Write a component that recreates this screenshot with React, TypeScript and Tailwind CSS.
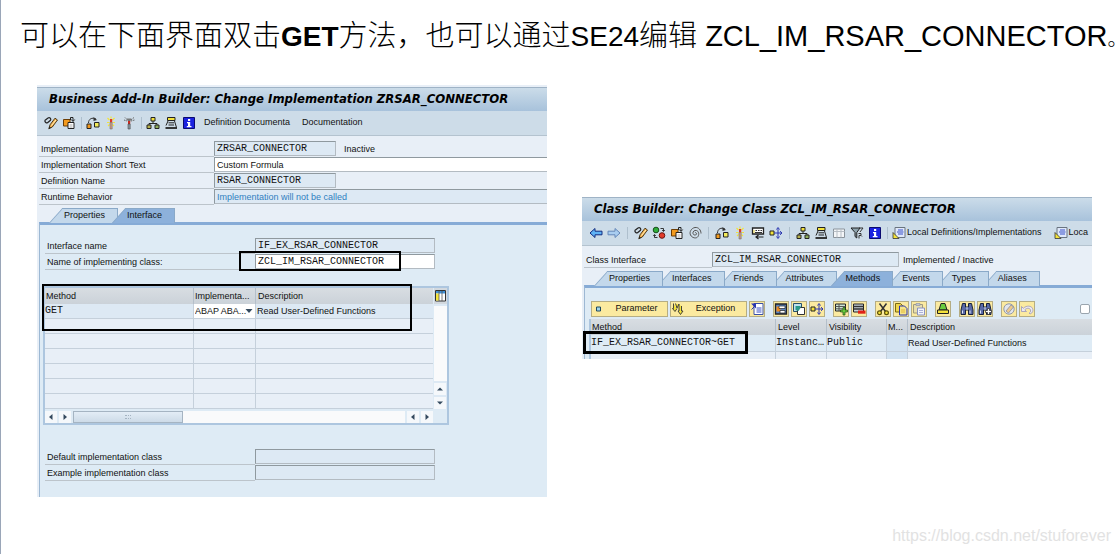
import { FC, ReactNode } from "react";
import clsx from "clsx";

type IconProps = { children: ReactNode };

const Icon: FC<IconProps> = ({ children }) => (
  <svg viewBox="0 0 14 14" className="size-3.5 shrink-0" fill="none" aria-hidden="true">
    {children}
  </svg>
);

const icons = {
  edit: (
    <Icon>
      <path d="M.8 4.500L4 2M3.500 6.800L6.800 4M.8 4.500c0 1.800 1.700 2.800 2.700 2.300M4 2c1.800-.8 2.800.3 2.800 2" stroke="#222" strokeWidth="1.200" />
      <path d="M4.800 12.800L6 8.800 11 2.200 13.500 4 8.300 11z" fill="#f6b04a" stroke="#3a2a10" strokeWidth=".9" />
      <path d="M4.800 12.800l.6-2.300 1.700 1.300z" fill="#222" />
      <path d="M7.500 9.500L12 4" stroke="#fff2c0" />
    </Icon>
  ),
  other: (
    <Icon>
      <path d="M1.500 3.500h6.500v6.500H1.500z" fill="#f39a1e" stroke="#6b3d05" />
      <path d="M6 6.500h6v6H6z" fill="#fff" stroke="#222" />
      <path d="M8.500 4V1.500h2.500V5M9.300 3.500L11 5.500 12.700 3.500" stroke="#222" />
      <path d="M7.500 9h3M7.500 11h3" stroke="#888" strokeWidth=".7" />
    </Icon>
  ),
  test: (
    <Icon>
      <path d="M2.500 7C2.500 3 6 1 10 3" stroke="#333" />
      <path d="M7.500 1L11 4 7.500 5z" fill="#333" />
      <path d="M1 8h4v4.500H1z" fill="#f39a1e" stroke="#222" />
      <path d="M8.500 6.500H13V11H8.500z" fill="#f3ec5a" stroke="#222" />
    </Icon>
  ),
  activate: (
    <Icon>
      <path d="M3.500 2l2 2M10.500 2l-2 2M3 6.500h2.500M11 6.500H8.500M7 .5v2M4 10l1.500-1.500M10 10L8.500 8.500" stroke="#f4e43a" strokeWidth="1.200" />
      <path d="M6 3h2.200v3.500H6z" fill="#e03426" />
      <path d="M6 6.500h2.200V13H6z" fill="#c99a86" stroke="#666" strokeWidth=".5" />
    </Icon>
  ),
  wand: (
    <Icon>
      <path d="M3 1.500l2.500 2.500M12 1.500L9 4M2 4l3 1M12.500 4L9 5" stroke="#666" strokeDasharray="1.500 .8" />
      <path d="M4.500 2.500h5l-1.300 3H6z" fill="#777" />
      <path d="M6 5h2.200v3H6z" fill="#c92a20" />
      <path d="M6 8h2.200v5H6z" fill="#8e9aa2" stroke="#333" strokeWidth=".5" />
    </Icon>
  ),
  tree: (
    <Icon>
      <path d="M7 5v2.500M3 9V7.500h8V9" stroke="#222" />
      <path d="M5 1.500h4V5H5z" fill="#f4e33a" stroke="#222" />
      <path d="M1 9h4v3.500H1z" fill="#b7b24c" stroke="#222" />
      <path d="M9 9h4v3.500H9z" fill="#8fae5a" stroke="#222" />
    </Icon>
  ),
  stack: (
    <Icon>
      <path d="M3.500 1.500h7.500V4.500H3.500z" fill="#f4e33a" stroke="#222" />
      <path d="M4.500 6.800h5.500M4.500 9h5.500M10.500 5L12.500 11.500M4 5L2 9.500" stroke="#222" />
      <path d="M1.500 12h11.500" stroke="#222" strokeWidth="1.800" />
    </Icon>
  ),
  info: (
    <Icon>
      <path d="M1.500 1.500h11v11h-11z" fill="#1b22e0" stroke="#0a0a70" />
      <path d="M6 3h2.200v2H6zM5 6h3.200v4H9.500v1.200H4.800V10H6V7.200H5z" fill="#fff" />
    </Icon>
  ),
  back: (
    <Icon>
      <path d="M1 7l5-4.500v2.700h7v3.600H6v2.700z" fill="#5fb2f4" stroke="#102a80" />
    </Icon>
  ),
  forward: (
    <Icon>
      <path d="M13 7L8 2.500v2.700H1v3.600h7v2.700z" fill="#a9cdf0" stroke="#6487b8" />
    </Icon>
  ),
  swap: (
    <Icon>
      <circle cx="4" cy="4" r="2.800" fill="#2fae3c" stroke="#184f1c" />
      <circle cx="10" cy="9.500" r="2.800" fill="#e23a2a" stroke="#6b130d" />
      <path d="M8.500 2.500h3v2.500M10.200 4l1.300 1.500L12.800 4M5.500 11.500h-3V9M1.300 10l1.200-1.500L3.800 10" stroke="#222" strokeWidth=".9" />
    </Icon>
  ),
  spiral: (
    <Icon>
      <path d="M7 7c.5-1 2 0 1.500 1.200S5.500 9.500 5 7.500 6.500 4 8.500 4.500 11.500 8 10 10.500 4 12 2.500 9 3.500 2 7 1.500 13 4 13 7.500" stroke="#555" />
    </Icon>
  ),
  train: (
    <Icon>
      <path d="M1.500 2h11v6h-11z" fill="#fff" stroke="#222" strokeWidth="1.300" />
      <path d="M4.500 4.500h1.500M7 4.500h1.500M9.500 4.500H11M4 6.500h7" stroke="#333" strokeWidth="1.200" />
      <path d="M5 11h7.500M7.500 9L5 11l2.500 2" stroke="#222" strokeWidth="1.200" />
      <path d="M2.500 4h1v3h-1z" fill="#e8d338" />
    </Icon>
  ),
  expand: (
    <Icon>
      <path d="M1 5h4v4H1z" fill="#f4e33a" stroke="#222" />
      <path d="M5 7h7.500M9 2.500v9M11 5.200L13 7l-2 1.800M7.500 3.500L9 1.500l1.500 2M7.500 10.500L9 12.500l1.500-2" stroke="#2a35b0" />
    </Icon>
  ),
  grid: (
    <Icon>
      <path d="M1.500 3h11v8.500h-11z" fill="#f4f6f8" stroke="#8a939b" />
      <path d="M1.500 5.500h11M5 3v8.500M9 3v8.500" stroke="#b7bec5" />
    </Icon>
  ),
  filter: (
    <Icon>
      <path d="M1 2h9L6.800 6.500V12L5 10.500v-4z" fill="#8fa3ad" stroke="#222" />
      <path d="M9 2h4l-3 4M8.500 7.500h2.500v2H9v3M11 9.500l1 1" stroke="#333" />
    </Icon>
  ),
  local: (
    <Icon>
      <path d="M3 1.500h10v10H3z" fill="#dfe8fa" stroke="#6a7480" />
      <path d="M6 4h5M5 6h6.500M6 8h5" stroke="#3a50c8" strokeWidth="1.200" />
      <path d="M1 6.500l6 6H1z" fill="#f4e33a" stroke="#333" strokeWidth=".8" />
    </Icon>
  ),
  field: (
    <Icon>
      <path d="M4.500 5h4v4h-4z" fill="#9fd4ea" stroke="#1f4a60" />
    </Icon>
  ),
  exception: (
    <Icon>
      <path d="M2.500 1.500v5h-1L4 9.500l2-3M4.500 1.500L6 6l2-4v7H7l2.500 3.500L12 9h-1.500V4" fill="#f4e33a" stroke="#333" strokeWidth=".9" />
    </Icon>
  ),
  doc: (
    <Icon>
      <path d="M4 1.500h9v11H4z" fill="#fff" stroke="#3a50a8" />
      <path d="M6.500 6h5M6.500 8h5M6.500 10h5" stroke="#3a50c8" />
      <path d="M1 1.500h5v5z" fill="#2a35b0" />
      <path d="M1.500 7.500l4-4" stroke="#2a35b0" />
    </Icon>
  ),
  monitor: (
    <Icon>
      <path d="M1.500 2h11v10h-11z" fill="#5a86c4" stroke="#222" strokeWidth="1.300" />
      <path d="M2.500 4.500h4v5h-4z" fill="#f08b1e" />
      <path d="M5 4h6v2.500H5zM6 8.500h5v2.500H6z" fill="#fff" stroke="#222" strokeWidth=".7" />
    </Icon>
  ),
  copy: (
    <Icon>
      <path d="M1.500 1.500h8v8h-8z" fill="#bfe0ee" stroke="#25506a" />
      <path d="M5.500 5.500h7v7h-7z" fill="#fff" stroke="#333" />
      <path d="M3.500 4h5v2l-2 3-3-1z" fill="#2a9a8a" />
    </Icon>
  ),
  insert: (
    <Icon>
      <path d="M1.500 2h10v7h-10z" fill="#cfe6d4" stroke="#222" />
      <path d="M1.500 4.500h10M1.500 6.800h10M5 2v7" stroke="#555" />
      <path d="M9 5.500h2V8h2.500v2H11v3H9v-3H6.500V8H9z" fill="#6acb3e" stroke="#1c4a10" strokeWidth=".7" />
    </Icon>
  ),
  remove: (
    <Icon>
      <path d="M1.500 2h10v8h-10z" fill="#c8d4dc" stroke="#222" />
      <path d="M1.500 4.500h10M1.500 7h10" stroke="#333" strokeWidth="1.300" />
      <path d="M6 8.500h7.500v3.200H6z" fill="#e02318" />
    </Icon>
  ),
  cut: (
    <Icon>
      <path d="M3.500 1.500l6 8M10.500 1.500l-6 8" stroke="#333" strokeWidth="1.500" />
      <circle cx="3.500" cy="10.800" r="1.900" fill="#f4e33a" stroke="#5a4f08" strokeWidth="1.200" />
      <circle cx="10.500" cy="10.800" r="1.900" fill="#f4e33a" stroke="#5a4f08" strokeWidth="1.200" />
    </Icon>
  ),
  pages: (
    <Icon>
      <path d="M1.500 1.500h5l2 2V10h-7z" fill="#f0d54a" stroke="#7a6a10" />
      <path d="M5.500 4h5l2.500 2.500V13H5.500z" fill="#f6e58a" stroke="#2a35b0" />
      <path d="M7 8h4M7 10h4" stroke="#e0b83a" />
    </Icon>
  ),
  paste: (
    <Icon>
      <path d="M1.500 2.500h9V11h-9z" fill="#e8dfae" stroke="#a09a80" />
      <path d="M4 1.500h4v2H4z" fill="#c4c8d0" stroke="#9097a8" strokeWidth=".7" />
      <path d="M5.500 6h7v7h-7z" fill="#f2f4fb" stroke="#8a92c0" />
      <path d="M7 8.500h4M7 10.500h4" stroke="#aab0d8" />
    </Icon>
  ),
  print: (
    <Icon>
      <path d="M5 1.500h4L11 8H3z" fill="#6acb3e" stroke="#222" />
      <path d="M1.500 8h11v3.500h-11z" fill="#f4e33a" stroke="#222" />
    </Icon>
  ),
  find: (
    <Icon>
      <path d="M2.500 1.500h3V5h3V1.500h3L13 8v4.500H8.500V8h-3v4.500H1V8z" fill="#5a6aa8" stroke="#16203a" />
      <path d="M2.500 8.500v3M10 8.500v3M7 5v3" stroke="#dfe6f8" />
    </Icon>
  ),
  findNext: (
    <Icon>
      <path d="M2.500 1.500h3V5h3V1.500h3L13 8v4.500H8.500V8h-3v4.500H1V8z" fill="#5a6aa8" stroke="#16203a" />
      <path d="M2.500 8.500v3M7 5v3" stroke="#dfe6f8" />
      <path d="M9.500 6.500h2v2h2v2h-2v2h-2v-2h-2v-2h2z" fill="#fff" stroke="#222" strokeWidth=".7" />
    </Icon>
  ),
  stamp: (
    <Icon>
      <circle cx="7" cy="7" r="5.200" fill="#e2e5ec" stroke="#9299a8" />
      <path d="M4 9l5-6 2.500 2L6.500 11z" fill="#efc98a" stroke="#8a8f9c" strokeWidth=".8" />
    </Icon>
  ),
  undo: (
    <Icon>
      <path d="M1.500 4.500v5h5L4.800 7.800C7 5.500 10 6 10.500 8s-.5 2.500-1.500 3l1 1c3-1 3.500-4 2.300-6S7 3 3.300 6.300z" fill="#eceaf2" stroke="#9a96b8" strokeWidth=".8" />
    </Icon>
  ),
};

const Divider: FC<{ wide?: boolean }> = ({ wide }) => (
  <span className={clsx("h-3 shrink-0 flex justify-center", wide ? "w-[5px]" : "w-0.5")}>
    <span className="w-px h-full bg-[#aebfcd]" />
  </span>
);

const ToolButton: FC<{ label: string; children: ReactNode }> = ({ label, children }) => (
  <button type="button" aria-label={label} className="shrink-0">
    {children}
  </button>
);

const YellowButton: FC<{ label: string; children: ReactNode }> = ({ label, children }) => (
  <button
    type="button"
    aria-label={label}
    className="size-4 shrink-0 flex items-center justify-center border border-[#b5ad84] bg-[#fbeaa0]"
  >
    {children}
  </button>
);

const TitleBar: FC<{ text: string }> = ({ text }) => (
  <h2 className="h-6 pl-3 leading-[22px] border-t border-[#9fb3c6] bg-linear-to-b from-[#cbdce9] to-[#a8c2db] font-['DejaVu_Sans_Condensed','DejaVu_Sans',sans-serif] text-[13px] font-bold italic text-black whitespace-nowrap overflow-hidden">
    {text}
  </h2>
);

const Toolbar: FC<{ children: ReactNode }> = ({ children }) => (
  <div className="h-[25px] pl-[7px] flex items-center gap-1 border-b border-[#b4c3cf] bg-[#cddce8] whitespace-nowrap overflow-hidden">
    {children}
  </div>
);

type FieldProps = {
  id: string;
  label: string;
  value?: string;
  labelClass: string;
  inputClass: string;
  after?: string;
};

const Field: FC<FieldProps> = ({ id, label, value = "", labelClass, inputClass, after }) => (
  <div className="flex h-4">
    <label htmlFor={id} className={clsx("shrink-0 pl-0.5 border-b border-[#bcc4cb] leading-4", labelClass)}>
      {label}
    </label>
    <input
      id={id}
      defaultValue={value}
      spellCheck={false}
      className={clsx(
        "h-[15px] px-0.5 border border-[#b3bbc2] border-t-[#8f999f] border-l-[#8f999f] outline-none",
        inputClass
      )}
    />
    {after && <span className="leading-4">{after}</span>}
  </div>
);

const Tabs: FC<{ names: string[]; active: string }> = ({ names, active }) => (
  <div role="tablist" className="flex mt-[3px] pl-4 -mb-px isolate">
    {names.map((name, i) => (
      <button
        key={name}
        type="button"
        role="tab"
        aria-selected={name === active}
        style={{ zIndex: name === active ? 20 : 10 - i }}
        className={clsx(
          "relative h-[15px] -ml-[6px] pl-[15px] pr-[13px] leading-[15px]",
          "before:absolute before:inset-y-0 before:left-0 before:w-[13px] before:origin-bottom-left before:-skew-x-[42deg] before:border-t before:border-l before:border-[#8aa9c8]",
          "after:absolute after:inset-y-0 after:left-[13px] after:right-0 after:border-t after:border-r after:border-[#8aa9c8] after:-z-10",
          name === active
            ? "isolate before:-z-10 before:bg-[#8db1db] after:bg-[#8db1db]"
            : "isolate before:-z-10 before:bg-[#c3d8eb] after:bg-[#c3d8eb]"
        )}
      >
        {name}
      </button>
    ))}
  </div>
);

const Arrow: FC<{ d: string }> = ({ d }) => (
  <svg viewBox="0 0 8 8" className="size-2" fill="#34495e" aria-hidden="true">
    <path d={d} />
  </svg>
);

const arrows = {
  left: "M5.500 1v6L2 4z",
  right: "M2.500 1v6L6 4z",
  up: "M1 5.500h6L4 2.500z",
  down: "M1 2.500h6L4 5.500z",
  menu: "M.5 2h7L4 6z",
};

const ScrollButton: FC<{ label: string; d: string }> = ({ label, d }) => (
  <button type="button" aria-label={label} className="size-3 shrink-0 flex items-center justify-center bg-[#f5f8fb]">
    <Arrow d={d} />
  </button>
);

const emptyRows = [1, 2, 3, 4, 5, 6];

const MethodTable: FC = () => (
  <div className="relative w-[406px] mt-4 border-2 border-[#adc6df]">
    <div className="flex gap-px">
      <table className="grow table-fixed border-separate border-spacing-0 text-left">
        <thead>
          <tr className="h-4 bg-linear-to-b from-[#d8dde2] to-[#cbd2d9]">
            <th className="w-[149px] p-0 pl-px font-normal leading-[15px] border-r border-[#b4bfca]">Method</th>
            <th className="w-[62px] p-0 pl-px font-normal leading-[15px] border-r border-[#b4bfca]">Implementa...</th>
            <th className="p-0 pl-0.5 font-normal leading-[15px]">Description</th>
          </tr>
        </thead>
        <tbody className="bg-[#e8eff7]">
          <tr className="h-[15px] bg-[#dde9f4]">
            <td className="p-0 font-mono text-[10px] leading-[14px] border-r border-b border-[#c5d0db]">GET</td>
            <td className="p-0 border-r border-b border-[#c5d0db] bg-white">
              <div className="relative flex items-center h-[14px]">
                <select aria-label="Implementation type" className="appearance-none w-full pl-px leading-[14px] bg-transparent outline-none">
                  <option>ABAP ABA...</option>
                </select>
                <span className="absolute right-0.5 pointer-events-none">
                  <Arrow d={arrows.menu} />
                </span>
              </div>
            </td>
            <td className="p-0 pl-px leading-[14px] border-b border-[#c5d0db]">Read User-Defined Functions</td>
          </tr>
          {emptyRows.map((row) => (
            <tr key={row} className="h-[15px]">
              <td className="p-0 border-r border-b border-[#c5d0db]" />
              <td className="p-0 border-r border-b border-[#c5d0db]" />
              <td className="p-0 border-b border-[#c5d0db]" />
            </tr>
          ))}
        </tbody>
      </table>
      <div className="w-[13px] flex flex-col gap-0.5 bg-[#dde9f4]">
        <button type="button" aria-label="Table settings" className="h-4 bg-[#d3d9df]">
          <svg viewBox="0 0 13 16" className="w-[13px] h-4" aria-hidden="true">
            <path d="M1.500 2.500h10v10.500h-10z" fill="#fff" stroke="#333" />
            <path d="M2 3h9v2.500H2z" fill="#3f8fd6" />
            <path d="M2 5.500h3V12.500H2z" fill="#f6e53c" />
            <path d="M5 3v10M8 3v10" stroke="#555" strokeWidth=".8" />
          </svg>
        </button>
        <div className="grow bg-[#f9fafb]" />
        <ScrollButton label="Scroll up" d={arrows.up} />
        <ScrollButton label="Scroll down" d={arrows.down} />
      </div>
    </div>
    <div className="flex gap-0.5 pt-0.5 pr-[14px]">
      <ScrollButton label="First column" d={arrows.left} />
      <ScrollButton label="Previous column" d={arrows.right} />
      <div className="grow bg-[#f9fafb]">
        <div className="w-[110px] h-3 flex items-center justify-center border border-[#a5b4c2] bg-linear-to-b from-[#e3edf6] to-[#cddbe8]">
          <span className="w-1.5 h-1 border-y border-dotted border-[#a5b4c2]" />
        </div>
      </div>
      <ScrollButton label="Next column" d={arrows.left} />
      <ScrollButton label="Last column" d={arrows.right} />
    </div>
    <div className="absolute -left-[3px] -top-1 w-[370px] h-[47px] border-2 border-black pointer-events-none" />
  </div>
);

const AddInBuilder: FC = () => (
  <section className="min-w-0 pt-0.5 bg-[#e8eff7] overflow-hidden">
    <TitleBar text="Business Add-In Builder: Change Implementation ZRSAR_CONNECTOR" />
    <Toolbar>
      <ToolButton label="Display/Change">{icons.edit}</ToolButton>
      <ToolButton label="Other implementation">{icons.other}</ToolButton>
      <Divider />
      <ToolButton label="Check">{icons.test}</ToolButton>
      <ToolButton label="Activate">{icons.activate}</ToolButton>
      <ToolButton label="Deactivate">{icons.wand}</ToolButton>
      <Divider />
      <ToolButton label="Hierarchy">{icons.tree}</ToolButton>
      <ToolButton label="Object list">{icons.stack}</ToolButton>
      <ToolButton label="Information">{icons.info}</ToolButton>
      <button type="button" className="ml-1">Definition Documenta</button>
      <button type="button" className="ml-2">Documentation</button>
    </Toolbar>
    <div className="pl-0.5 pt-[5px]">
      <Field
        id="impl-name"
        label="Implementation Name"
        value="ZRSAR_CONNECTOR"
        labelClass="w-[175px]"
        inputClass="w-[122px] mr-2 bg-[#dde9f4] font-mono text-[10px]"
        after="Inactive"
      />
      <Field id="impl-text" label="Implementation Short Text" value="Custom Formula" labelClass="w-[175px]" inputClass="grow border-r-0 bg-white" />
      <Field id="def-name" label="Definition Name" value="RSAR_CONNECTOR" labelClass="w-[175px]" inputClass="w-[122px] bg-[#dde9f4] font-mono text-[10px]" />
      <Field
        id="runtime"
        label="Runtime Behavior"
        value="Implementation will not be called"
        labelClass="w-[175px]"
        inputClass="grow border-r-0 bg-[#dde9f4] text-[#2f7fc1]"
      />
      <Tabs names={["Properties", "Interface"]} active="Interface" />
      <div className="border-t-[3px] border-l border-t-[#86abd6] border-l-[#9db8d3] bg-[#deebf5] pl-[3px] pt-[13px] pb-4">
        <div className="relative ml-0.5">
          <Field id="if-name" label="Interface name" value="IF_EX_RSAR_CONNECTOR" labelClass="w-[210px]" inputClass="w-[180px] bg-[#dde9f4] font-mono text-[10px]" />
          <Field id="class-name" label="Name of implementing class:" value="ZCL_IM_RSAR_CONNECTOR" labelClass="w-[210px]" inputClass="w-[180px] bg-white font-mono text-[10px]" />
          <div className="absolute left-[194px] top-[13px] w-[162px] h-5 border-2 border-black pointer-events-none" />
        </div>
        <MethodTable />
        <div className="ml-0.5 mt-6">
          <Field id="default-class" label="Default implementation class" labelClass="w-[210px]" inputClass="w-[180px] bg-[#dde9f4]" />
          <Field id="example-class" label="Example implementation class" labelClass="w-[210px]" inputClass="w-[180px] bg-[#dde9f4]" />
        </div>
      </div>
    </div>
  </section>
);

const ClassBuilder: FC = () => (
  <section className="min-w-0 mt-28 bg-[#e8eff7] overflow-hidden">
    <TitleBar text="Class Builder: Change Class ZCL_IM_RSAR_CONNECTOR" />
    <Toolbar>
      <ToolButton label="Back">{icons.back}</ToolButton>
      <ToolButton label="Forward">{icons.forward}</ToolButton>
      <Divider wide />
      <ToolButton label="Display/Change">{icons.edit}</ToolButton>
      <ToolButton label="Active/Inactive">{icons.swap}</ToolButton>
      <ToolButton label="Other object">{icons.other}</ToolButton>
      <ToolButton label="Enhance">{icons.spiral}</ToolButton>
      <Divider wide />
      <ToolButton label="Check">{icons.test}</ToolButton>
      <ToolButton label="Activate">{icons.activate}</ToolButton>
      <ToolButton label="Test">{icons.train}</ToolButton>
      <ToolButton label="Where-used list">{icons.expand}</ToolButton>
      <Divider wide />
      <ToolButton label="Hierarchy">{icons.tree}</ToolButton>
      <ToolButton label="Object list">{icons.stack}</ToolButton>
      <ToolButton label="Table">{icons.grid}</ToolButton>
      <ToolButton label="Filter">{icons.filter}</ToolButton>
      <ToolButton label="Information">{icons.info}</ToolButton>
      <Divider />
      <button type="button" className="shrink-0 flex items-center gap-px">
        {icons.local}
        Local Definitions/Implementations
      </button>
      <button type="button" className="shrink-0 flex items-center gap-px ml-2">
        {icons.local}
        Loca
      </button>
    </Toolbar>
    <div className="pl-0.5 pt-1.5">
      <Field
        id="class-if"
        label="Class Interface"
        value="ZCL_IM_RSAR_CONNECTOR"
        labelClass="w-32"
        inputClass="w-[187px] mr-1 bg-[#dde9f4] font-mono text-[10px]"
        after="Implemented / Inactive"
      />
      <Tabs names={["Properties", "Interfaces", "Friends", "Attributes", "Methods", "Events", "Types", "Aliases"]} active="Methods" />
      <div className="border-t-[3px] border-l border-t-[#86abd6] border-l-[#9db8d3] bg-[#deebf5] pl-1 pt-[13px]">
        <div className="flex items-center gap-2 pl-0.5">
          <div className="flex gap-0.5">
            <button type="button" className="w-[77px] h-4 flex items-center border border-[#b5ad84] bg-[#fbeaa0]">
              {icons.field}
              <span className="grow text-center">Parameter</span>
            </button>
            <button type="button" className="w-[77px] h-4 flex items-center border border-[#b5ad84] bg-[#fbeaa0]">
              {icons.exception}
              <span className="grow text-center">Exception</span>
            </button>
            <YellowButton label="Source code">{icons.doc}</YellowButton>
          </div>
          <div className="flex gap-0.5">
            <YellowButton label="Signature">{icons.monitor}</YellowButton>
            <YellowButton label="Copy method">{icons.copy}</YellowButton>
            <YellowButton label="Where used">{icons.expand}</YellowButton>
          </div>
          <div className="flex gap-0.5">
            <YellowButton label="Insert row">{icons.insert}</YellowButton>
            <YellowButton label="Delete row">{icons.remove}</YellowButton>
          </div>
          <div className="flex gap-0.5">
            <YellowButton label="Cut">{icons.cut}</YellowButton>
            <YellowButton label="Copy">{icons.pages}</YellowButton>
            <YellowButton label="Paste">{icons.paste}</YellowButton>
          </div>
          <YellowButton label="Sort">{icons.print}</YellowButton>
          <div className="flex gap-0.5">
            <YellowButton label="Find">{icons.find}</YellowButton>
            <YellowButton label="Find next">{icons.findNext}</YellowButton>
          </div>
          <div className="flex gap-0.5">
            <YellowButton label="Redefine">{icons.stamp}</YellowButton>
            <YellowButton label="Undo">{icons.undo}</YellowButton>
          </div>
          <input type="checkbox" aria-label="Filter" className="appearance-none size-2.5 ml-auto mr-0.5 border border-[#9aa5ae] rounded-[2px] bg-white" />
        </div>
        <div className="relative mt-0.5">
          <table className="w-full table-fixed border-separate border-spacing-0 border-l-2 border-[#adc6df] text-left">
            <thead>
              <tr className="h-4 bg-linear-to-b from-[#d8dde2] to-[#cbd2d9]">
                <th className="w-[185px] p-0 pl-px font-normal leading-4 border-r border-[#b4bfca]">Method</th>
                <th className="w-[51px] p-0 pl-0.5 font-normal leading-4 border-r border-[#b4bfca]">Level</th>
                <th className="w-[60px] p-0 pl-0.5 font-normal leading-4 border-r border-[#b4bfca]">Visibility</th>
                <th className="w-[21px] p-0 pl-px font-normal leading-4 border-r border-[#b4bfca]">M...</th>
                <th className="p-0 pl-0.5 font-normal leading-4">Description</th>
              </tr>
            </thead>
            <tbody>
              <tr className="h-[17px] *:border-b *:border-[#c5d0db] *:p-0 *:leading-4">
                <td className="border-r font-mono text-[10px]">IF_EX_RSAR_CONNECTOR~GET</td>
                <td className="border-r pl-px font-mono text-[10px]">Instanc…</td>
                <td className="border-r pl-px font-mono text-[10px]">Public</td>
                <td className="border-r bg-[#d3e3f1]" />
                <td>Read User-Defined Functions</td>
              </tr>
              <tr className="h-[7px] bg-[#e8eff7] *:border-[#c5d0db] *:p-0">
                <td className="border-r" />
                <td className="border-r" />
                <td className="border-r" />
                <td className="border-r bg-[#d3e3f1]" />
                <td />
              </tr>
            </tbody>
          </table>
          <div className="absolute -left-[6px] top-3 w-[165px] h-[23px] border-3 border-black pointer-events-none" />
        </div>
      </div>
    </div>
  </section>
);

const App: FC = () => {
  return (
    <main className="relative min-h-screen overflow-hidden bg-white border-l border-[#9aa6b8] font-['Liberation_Sans',sans-serif] text-[9px] text-[#111] [--font-mono:'Liberation_Mono',monospace]">
      <h1 className="h-[52px] pt-5 pl-[19px] text-[29px] leading-8 font-light text-black whitespace-nowrap font-['Liberation_Sans','Noto_Sans_CJK_SC',sans-serif]">
        可以在下面界面双击<b className="text-[28px] font-bold">GET</b>方法，也可以通过<span className="text-[28px]">SE24</span>编辑 ZCL_IM_RSAR_CONNECTOR
        <span className="text-[20px] [font-feature-settings:'halt']">。</span>
      </h1>
      <div className="grid grid-cols-2 items-start gap-[35px] pl-9 pr-[27px] mt-[33px]">
        <AddInBuilder />
        <ClassBuilder />
      </div>
      <p className="absolute right-2 bottom-2 text-[16px] leading-5 text-[#e2e2e2] font-['Liberation_Sans',sans-serif]">
        https://blog.csdn.net/stuforever
      </p>
    </main>
  );
};

export default App;
